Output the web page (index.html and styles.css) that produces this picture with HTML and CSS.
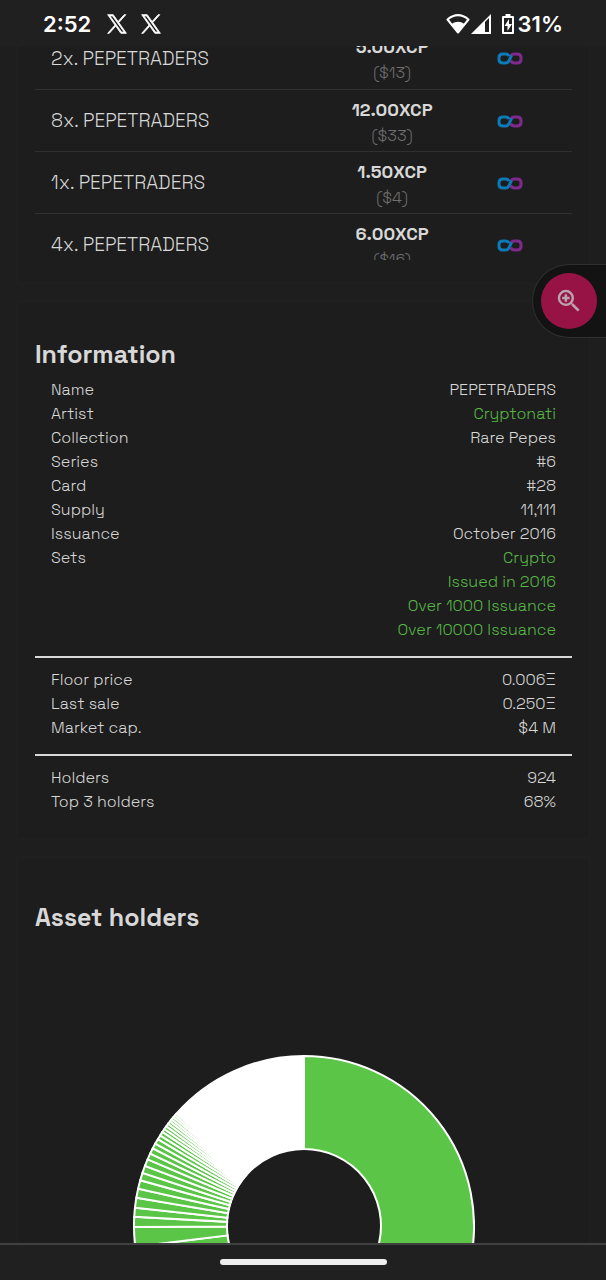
FILE: index.html
```html
<!DOCTYPE html>
<html lang="en">
<head>
    <meta charset="UTF-8">
    <meta name="viewport" content="width=device-width, initial-scale=1.0">
    <title>PEPETRADERS</title>
    <link rel="stylesheet" href="styles.css">
</head>
<body>
    <!-- Status bar -->
    <header class="status-bar">
        <div class="status-left">
            <span class="clock">2:52</span>
            <svg class="x-logo" viewBox="0 0 24 24"><path d="M14.2 10.3 22.6.8h-2l-7.300 8.200L7.500.8H.8l8.800 12.500L.8 23.200h2l7.700-8.700 6.100 8.700h6.700zM3.500 2.300h3.100l14 19.400h-3.100z"/></svg>
            <svg class="x-logo" viewBox="0 0 24 24"><path d="M14.2 10.3 22.6.8h-2l-7.300 8.200L7.500.8H.8l8.800 12.500L.8 23.200h2l7.700-8.700 6.100 8.700h6.700zM3.500 2.300h3.100l14 19.400h-3.100z"/></svg>
        </div>
        <div class="status-right">
            <svg class="wifi" viewBox="0 0 24 20"><path d="M1.500 5.500Q12-3.200 22.500 5.500L12 18.500z" fill="none" stroke="#fff" stroke-width="2" stroke-linejoin="round"/><path d="M5.500 10Q12 5.500 18.500 10L12 18.500z" fill="#fff"/></svg>
            <svg class="signal" viewBox="0 0 20 20"><path d="M0 20 20 0v20z" fill="#fff"/><path d="M14 8 18 4v14h-4z" fill="#202020"/></svg>
            <svg class="battery" viewBox="0 0 12 20"><path d="M3.500 0h5v2H11a1 1 0 0 1 1 1v16a1 1 0 0 1-1 1H1a1 1 0 0 1-1-1V3a1 1 0 0 1 1-1h2.500z" fill="#fff"/><path d="M2 4h8v14H2z" fill="#202020"/><path d="M7 5 2.500 12H5.500v5L10 10H7z" fill="#fff"/></svg>
            <span class="percent">31%</span>
        </div>
    </header>

    <main class="page">
        <!-- Orders -->
        <section class="card card-orders">
            <div class="orders-scroll">
                <table class="orders">
                    <tbody>
                        <tr>
                            <td class="order-name">2x. PEPETRADERS</td>
                            <td class="order-price"><strong>5.00XCP</strong><span>($13)</span></td>
                            <td class="order-source"><svg class="chain" viewBox="0 0 26 13"><use href="#chain"/></svg></td>
                        </tr>
                        <tr>
                            <td class="order-name">8x. PEPETRADERS</td>
                            <td class="order-price"><strong>12.00XCP</strong><span>($33)</span></td>
                            <td class="order-source"><svg class="chain" viewBox="0 0 26 13"><use href="#chain"/></svg></td>
                        </tr>
                        <tr>
                            <td class="order-name">1x. PEPETRADERS</td>
                            <td class="order-price"><strong>1.50XCP</strong><span>($4)</span></td>
                            <td class="order-source"><svg class="chain" viewBox="0 0 26 13"><use href="#chain"/></svg></td>
                        </tr>
                        <tr>
                            <td class="order-name">4x. PEPETRADERS</td>
                            <td class="order-price"><strong>6.00XCP</strong><span>($16)</span></td>
                            <td class="order-source"><svg class="chain" viewBox="0 0 26 13"><use href="#chain"/></svg></td>
                        </tr>
                    </tbody>
                </table>
            </div>
        </section>

        <!-- Information -->
        <section class="card">
            <h2>Information</h2>
            <dl class="info">
                <div><dt>Name</dt><dd>PEPETRADERS</dd></div>
                <div><dt>Artist</dt><dd><a href="#">Cryptonati</a></dd></div>
                <div><dt>Collection</dt><dd>Rare Pepes</dd></div>
                <div><dt>Series</dt><dd>#6</dd></div>
                <div><dt>Card</dt><dd>#28</dd></div>
                <div><dt>Supply</dt><dd>11,111</dd></div>
                <div><dt>Issuance</dt><dd>October 2016</dd></div>
                <div>
                    <dt>Sets</dt>
                    <dd>
                        <a href="#">Crypto</a>
                        <a href="#">Issued in 2016</a>
                        <a href="#">Over 1000 Issuance</a>
                        <a href="#">Over 10000 Issuance</a>
                    </dd>
                </div>
            </dl>
            <hr>
            <dl class="info">
                <div><dt>Floor price</dt><dd>0.006Ξ</dd></div>
                <div><dt>Last sale</dt><dd>0.250Ξ</dd></div>
                <div><dt>Market cap.</dt><dd>$4 M</dd></div>
            </dl>
            <hr>
            <dl class="info">
                <div><dt>Holders</dt><dd>924</dd></div>
                <div><dt>Top 3 holders</dt><dd>68%</dd></div>
            </dl>
        </section>

        <!-- Holders chart -->
        <section class="card card-chart">
            <h2>Asset holders</h2>
            <svg id="holders-chart" class="donut" viewBox="-171 -171 342 342" role="img" aria-label="Asset holders"></svg>
        </section>
    </main>

    <div class="fab-tray">
        <button class="fab" type="button" aria-label="Zoom in">
            <svg viewBox="0 0 24 24"><path d="M15.500 14h-.79l-.28-.27A6.470 6.470 0 0 0 16 9.500 6.500 6.500 0 1 0 9.500 16c1.610 0 3.090-.59 4.230-1.570l.27.28v.79l5 4.990L20.490 19l-4.990-5zm-6 0C7.010 14 5 11.990 5 9.500S7.010 5 9.500 5 14 7.010 14 9.500 11.990 14 9.500 14zM12.500 8.500h-2v-2h-2v2h-2v2h2v2h2v-2h2z"/></svg>
        </button>
    </div>

    <footer class="nav-bar"><span class="nav-handle"></span></footer>

    <svg class="defs" aria-hidden="true">
        <defs>
            <g id="chain" fill="none" stroke-width="3">
                <path d="M13.500 8.500Q15 11 17.500 11H20Q24 11 24 7.500v-2Q24 2 20 2h-3Q15 2 13.500 4.500" stroke="#7d2a8c"/>
                <path d="M14.500 3.500 12 8.500Q11 11 8.500 11H6Q2 11 2 7.500v-2Q2 2 6 2h2.500Q11 2 12 4" stroke="#0d7ab8"/>
            </g>
        </defs>
    </svg>

    <script>
        // end angle of each holder's slice, in degrees clockwise from the top
        const stops = [
            206, 245, 263, 269.7, 273.1, 276.2, 279.6, 282.7, 285.6, 288.2, 290.7,
            293.1, 295.2, 297.2, 299, 300.7, 302.2, 303.6, 304.8, 305.9, 307,
            308, 308.9, 309.8, 310.6, 311.4
        ];
        const outer = 170;
        const inner = 77;
        const chart = document.getElementById('holders-chart');

        function point(radius, angle) {
            const rad = (angle - 90) * Math.PI / 180;
            return `${(radius * Math.cos(rad)).toFixed(2)} ${(radius * Math.sin(rad)).toFixed(2)}`;
        }

        function addSlice(from, to, className) {
            const large = to - from > 180 ? 1 : 0;
            const path = document.createElementNS('http://www.w3.org/2000/svg', 'path');
            path.setAttribute('class', className);
            path.setAttribute('d', `M${point(outer, from)} A${outer} ${outer} 0 ${large} 1 ${point(outer, to)} L${point(inner, to)} A${inner} ${inner} 0 ${large} 0 ${point(inner, from)}Z`);
            chart.appendChild(path);
        }

        let start = 0;
        stops.forEach(stop => {
            addSlice(start, stop, 'slice');
            start = stop;
        });

        // the long tail of small holders
        addSlice(start, 360, 'slice rest');
    </script>
</body>
</html>
```

FILE: styles.css
```css
* {
    margin: 0;
    padding: 0;
    box-sizing: border-box;
}

body {
    display: flex;
    flex-direction: column;
    height: 100vh;
    overflow: hidden;
    font-family: 'Space Grotesk', Inter, sans-serif;
    font-weight: 300;
    font-size: 16px;
    line-height: 24px;
    background: #1e1e1e;
    color: #d8d8d8;
}

/* Status bar */
.status-bar {
    flex: none;
    display: flex;
    justify-content: space-between;
    align-items: center;
    height: 46px;
    padding: 2px 43px 0;
    background: #202020;
    color: #fff;
    font-family: Inter, sans-serif;
    font-size: 22px;
    font-weight: 600;
}

.status-left,
.status-right {
    display: flex;
    align-items: center;
}

.x-logo {
    width: 20px;
    height: 20px;
    margin-left: 14px;
    fill: #fff;
    stroke: #fff;
}

.clock {
    margin-right: 2px;
}

.wifi {
    width: 24px;
    height: 20px;
    margin-right: 1px;
}

.signal {
    width: 20px;
    height: 20px;
    margin-right: 11px;
}

.battery {
    width: 12px;
    height: 20px;
    margin-right: 4px;
}

/* Page */
.page {
    flex: 1;
    min-height: 0;
    overflow: hidden;
    padding: 0 15px 0 16px;
}

.card {
    margin-bottom: 15px;
    padding: 37px 16px 24px;
    background: #1d1d1d;
    border: 3px solid #1f1f1f;
}

.card-orders {
    padding-top: 0;
    padding-bottom: 22px;
    border-top: 0;
}

h2 {
    font-size: 25px;
    font-weight: 600;
    line-height: 28px;
    margin-bottom: 10px;
}

a {
    color: #57b846;
    text-decoration: none;
}

hr {
    height: 2px;
    margin: 14px 0 10px;
    border: 0;
    background: #d8d8d8;
}

/* Orders */
.orders-scroll {
    height: 214px;
    overflow: hidden;
}

.orders {
    width: 100%;
    margin-top: -19px;
    table-layout: fixed;
    border-collapse: collapse;
}

.orders tr {
    height: 62px;
    border-bottom: 1px solid #303030;
}

.order-name {
    width: 56%;
    padding: 2px 0 0 16px;
    font-size: 19px;
}

.order-price {
    width: 21%;
    padding-top: 5px;
    line-height: 26px;
    text-align: center;
}

.order-price strong,
.order-price span {
    display: block;
}

.order-price strong {
    font-size: 18px;
    font-weight: 600;
}

.order-price span {
    color: #707070;
}

.order-source {
    width: 23%;
    padding-top: 2px;
    text-align: center;
}

.chain {
    display: block;
    width: 26px;
    height: 13px;
    margin: 0 auto;
}

/* Information */
.info {
    padding: 0 16px;
}

.info div {
    display: flex;
    justify-content: space-between;
}

.info dd {
    text-align: right;
}

.info dd a {
    display: block;
}

/* Holders chart */
.card-chart {
    padding-top: 44px;
}

.donut {
    display: block;
    width: 342px;
    margin: 124px auto 0;
}

.slice {
    fill: #5ac546;
    stroke: #fff;
    stroke-width: 2;
}

.slice.rest {
    fill: #fff;
}

/* Floating button */
.fab-tray {
    position: fixed;
    top: 264px;
    right: 0;
    padding: 8px 9px 8px 8px;
    background: #131313;
    border: 1px solid #303030;
    border-right: 0;
    border-radius: 37px 0 0 37px;
}

.fab {
    display: flex;
    align-items: center;
    justify-content: center;
    width: 56px;
    height: 56px;
    border: 0;
    border-radius: 50%;
    background: #971346;
}

.fab svg {
    width: 30px;
    height: 30px;
    fill: #b9a3ac;
}

/* Navigation bar */
.nav-bar {
    flex: none;
    display: flex;
    justify-content: center;
    align-items: center;
    height: 37px;
    padding-bottom: 2px;
    background: #202020;
    border-top: 2px solid #404040;
}

.nav-handle {
    width: 167px;
    height: 6px;
    border-radius: 3px;
    background: #eee;
}

.defs {
    position: absolute;
    width: 0;
    height: 0;
}
```
